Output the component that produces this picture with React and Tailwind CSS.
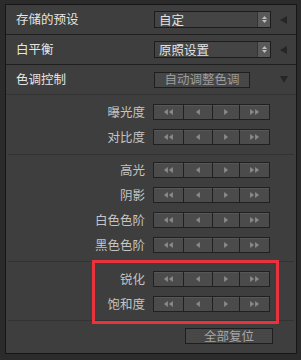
import React from "react";

const sliders1 = ["曝光度", "对比度"];
const sliders2 = ["高光", "阴影", "白色色阶", "黑色色阶"];
const sliders3 = ["锐化", "饱和度"];

function Tri({ dir }) {
  // small arrow glyph used in the step buttons
  const d = dir === "l" ? "M4 0 L0 3 L4 6 Z" : "M0 0 L4 3 L0 6 Z";
  return (
    <svg width="4" height="6" viewBox="0 0 4 6" className="block">
      <path d={d} fill="#8e8e8e" stroke="#6c6c6c" strokeWidth="0.6" />
    </svg>
  );
}

function StepButtons() {
  return (
    <div className="flex h-[16px] border border-[#202020] bg-[#202020] gap-px">
      <div className="flex w-[29px] items-center justify-center gap-[1px] bg-[#4b4b4b] shadow-[inset_0_1px_0_#575757]">
        <Tri dir="l" />
        <Tri dir="l" />
      </div>
      <div className="flex w-[28px] items-center justify-center bg-[#4b4b4b] shadow-[inset_0_1px_0_#575757]">
        <Tri dir="l" />
      </div>
      <div className="flex w-[26px] items-center justify-center bg-[#4b4b4b] shadow-[inset_0_1px_0_#575757]">
        <Tri dir="r" />
      </div>
      <div className="flex w-[29px] items-center justify-center gap-[1px] bg-[#4b4b4b] shadow-[inset_0_1px_0_#575757]">
        <Tri dir="r" />
        <Tri dir="r" />
      </div>
    </div>
  );
}

function SliderRow({ label }) {
  return (
    <div className="flex h-[16px] items-center">
      <span className="w-[139px] text-right text-[12.5px] leading-none text-[#c4c4c4]">{label}</span>
      <div className="ml-[8px]">
        <StepButtons />
      </div>
    </div>
  );
}

function Dropdown({ value }) {
  return (
    <div className="flex h-[17px] w-[117px] border border-[#1c1c1c] bg-[#444444]">
      <span className="flex-1 pl-[4px] text-[12.5px] leading-[15px] text-[#e2e2e2]">{value}</span>
      <div className="flex w-[13px] flex-col items-center justify-center gap-[1px] border-l border-[#333] bg-[#595959]">
        <svg width="5" height="3" viewBox="0 0 5 3"><path d="M0 3 L2.5 0 L5 3 Z" fill="#bdbdbd" /></svg>
        <svg width="5" height="3" viewBox="0 0 5 3"><path d="M0 0 L2.5 3 L5 0 Z" fill="#bdbdbd" /></svg>
      </div>
    </div>
  );
}

function HeaderRow({ label, children }) {
  return (
    <div className="flex h-[30px] items-center border-b border-[#1e1e1e]">
      <span className="w-[148px] pl-[10px] text-[12.5px] leading-none text-[#e4e4e4]">{label}</span>
      {children}
      <div className="flex w-[25px] justify-center">
        <svg width="7" height="8" viewBox="0 0 7 8"><path d="M7 0 L7 8 L0 4 Z" fill="#262626" /></svg>
      </div>
    </div>
  );
}

export default function App() {
  return (
    <div className="h-[360px] w-[301px] overflow-hidden bg-[#2b2b2b] pt-[4px] pl-[5px] font-['Noto_Sans_CJK_SC',sans-serif]">
      <div className="relative h-[350px] w-[292px] border border-[#161616] bg-[#3e3e3e]">
        <HeaderRow label="存储的预设">
          <Dropdown value="自定" />
        </HeaderRow>
        <HeaderRow label="白平衡">
          <Dropdown value="原照设置" />
        </HeaderRow>
        <div className="flex h-[30px] items-center border-b border-[#333333]">
          <span className="w-[148px] pl-[10px] text-[12.5px] leading-none text-[#e4e4e4]">色调控制</span>
          <div className="flex h-[16px] w-[96px] items-center justify-center border border-[#1e1e1e] bg-[#474747] text-[12.5px] leading-none text-[#9c9c9c]">
            自动调整色调
          </div>
          <div className="flex w-[46px] justify-end pr-[8px]">
            <svg width="8" height="7" viewBox="0 0 8 7"><path d="M0 0 L8 0 L4 7 Z" fill="#262626" /></svg>
          </div>
        </div>

        <div className="flex flex-col gap-[9px] pt-[9px] pb-[9px]">
          {sliders1.map((s) => <SliderRow key={s} label={s} />)}
        </div>
        <div className="mx-[2px] h-px bg-[#333333]" />
        <div className="flex flex-col gap-[9px] pt-[7px] pb-[8px]">
          {sliders2.map((s) => <SliderRow key={s} label={s} />)}
        </div>
        <div className="mx-[2px] h-px bg-[#333333]" />
        <div className="flex flex-col gap-[9px] pt-[9px] pb-[8px]">
          {sliders3.map((s) => <SliderRow key={s} label={s} />)}
        </div>
        <div className="mx-[2px] h-px bg-[#333333]" />
        <div className="flex justify-end pt-[7px] pr-[23px]">
          <div className="flex h-[16px] w-[88px] items-center justify-center border border-[#1e1e1e] bg-[#474747] text-[12.5px] leading-none text-[#a8a8a8]">
            全部复位
          </div>
        </div>

        {/* red annotation box */}
        <div className="absolute left-[86px] top-[255px] h-[64px] w-[187px] border-[3px] border-[#e8333d]" />
      </div>
    </div>
  );
}
